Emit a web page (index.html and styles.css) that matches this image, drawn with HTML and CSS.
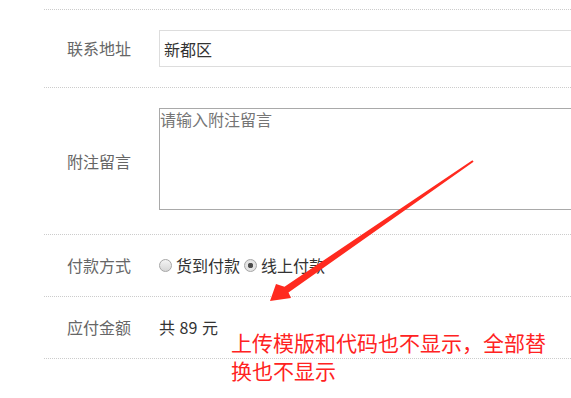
FILE: index.html
```html
<!DOCTYPE html>
<html>
<head>
    <title>订单信息</title>
    <link rel="stylesheet" href="styles.css">
</head>
<body>
    <div class="form">
        <div class="row">
            <label class="label">联系地址</label>
            <input class="text-input" type="text" value="新都区">
        </div>
        <div class="row">
            <label class="label">附注留言</label>
            <textarea class="memo" placeholder="请输入附注留言"></textarea>
        </div>
        <div class="row">
            <label class="label">付款方式</label>
            <div class="options">
                <label class="option"><input type="radio" name="pay"> 货到付款</label>
                <label class="option"><input type="radio" name="pay" checked> 线上付款</label>
            </div>
        </div>
        <div class="row">
            <label class="label">应付金额</label>
            <div class="total">共 89 元</div>
        </div>
    </div>

    <svg class="arrow" width="571" height="398" viewBox="0 0 571 398">
        <polygon points="472.4,160.2 284.5,286.7 276,284 270,301 291,298 288.5,292.5 473.6,161.8" fill="#ff2a1f"/>
    </svg>
    <div class="note">上传模版和代码也不显示，全部替<br>换也不显示</div>
</body>
</html>
```

FILE: styles.css
```css
body { margin: 0; background: #fff; font-family: "Noto Sans CJK SC", "Noto Sans", sans-serif; font-size: 16px; overflow: hidden; width: 571px; height: 398px; position: relative; }
.form { margin-left: 44px; padding-top: 9px; }
.row { display: flex; align-items: center; padding: 20px 0; border-top: 1px dotted #ccc; line-height: 21px; }
.row:last-child { border-bottom: 1px dotted #ccc; }
.label { width: 115px; flex-shrink: 0; padding-left: 23px; box-sizing: border-box; color: #666; }
.text-input { flex: 1; min-width: 0; height: 37px; box-sizing: border-box; border: 1px solid #ddd; padding: 0 4px; margin: 0 -3px 0 0; font: inherit; color: #333; outline: none; }
.memo { flex: 1; min-width: 0; display: block; height: 102px; box-sizing: border-box; border: 1px solid #a9a9a9; padding: 0; margin: 0 -3px 4px 0; font: inherit; line-height: 20px; resize: none; outline: none; }
.memo::placeholder { color: #757575; }
.options { display: flex; gap: 4px; color: #333; }
.option { display: inline-flex; align-items: center; gap: 4px; }
.option input { appearance: none; -webkit-appearance: none; width: 13px; height: 13px; margin: 0; border: 1px solid #a6a6a6; border-radius: 50%; background: linear-gradient(#f4f4f4, #d6d6d6); box-sizing: border-box; }
.option input:checked { background: radial-gradient(circle, #444 0, #555 2.5px, #e6e6e6 3px, #dcdcdc 100%); }
.total { color: #333; word-spacing: 1px; }
.arrow { position: absolute; left: 0; top: 0; }
.note { position: absolute; left: 231px; top: 328px; font-size: 21px; line-height: 28px; color: #ff2222; }
```
